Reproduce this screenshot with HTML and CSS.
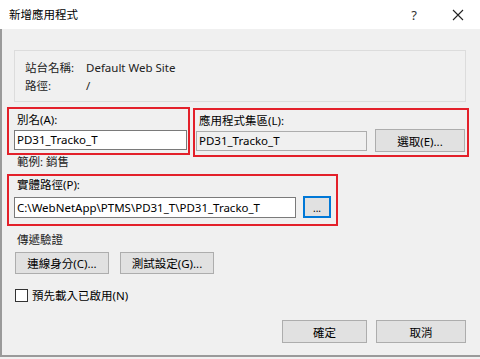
FILE: index.html
```html
<!DOCTYPE html>
<html lang="zh-Hant">
<head>
<meta charset="utf-8">
<title>新增應用程式</title>
<link rel="stylesheet" href="styles.css">
</head>
<body>
<div class="dialog">
  <div class="titlebar">
    <span class="title">新增應用程式</span>
    <span class="help">?</span>
    <svg class="close" width="12" height="12" viewBox="0 0 12 12"><path d="M1 1 L11 11 M11 1 L1 11" stroke="#222" stroke-width="1.1" fill="none"/></svg>
  </div>
  <div class="content">
    <div class="groupbox">
      <div class="info-row"><span class="info-label">站台名稱:</span><span>Default Web Site</span></div>
      <div class="info-row"><span class="info-label">路徑:</span><span>/</span></div>
    </div>
    <div class="row-top">
      <div class="anno box-alias">
        <div class="label">別名(A):</div>
        <div class="input">PD31_Tracko_T</div>
      </div>
      <div class="anno box-pool">
        <div class="label">應用程式集區(L):</div>
        <div class="pool-row">
          <div class="input readonly">PD31_Tracko_T</div>
          <div class="btn btn-select">選取(E)...</div>
        </div>
      </div>
    </div>
    <div class="example">範例: 銷售</div>
    <div class="anno box-path">
      <div class="label">實體路徑(P):</div>
      <div class="path-row">
        <div class="input path-input">C:\WebNetApp\PTMS\PD31_T\PD31_Tracko_T</div>
        <div class="btn btn-browse">...</div>
      </div>
    </div>
    <div class="section-label">傳遞驗證</div>
    <div class="auth-row">
      <div class="btn btn-auth">連線身分(C)...</div>
      <div class="btn btn-auth">測試設定(G)...</div>
    </div>
    <div class="check-row">
      <span class="checkbox"></span>
      <span class="check-label">預先載入已啟用(N)</span>
    </div>
    <div class="footer">
      <div class="btn btn-ok">確定</div>
      <div class="btn btn-cancel">取消</div>
    </div>
  </div>
</div>
</body>
</html>
```
FILE: styles.css
```css
html, body {
  margin: 0;
  padding: 0;
}
body {
  width: 480px;
  height: 359px;
  overflow: hidden;
  background: #f0f0f0;
  font-family: "Noto Sans", "Noto Sans CJK TC", sans-serif;
  font-size: 11.5px;
  color: #000;
}
.dialog {
  height: 357px;
  box-sizing: border-box;
  background: #f0f0f0;
  box-shadow: inset 2px -2px 0 0 #9a9a9a;
  position: relative;
}
.titlebar {
  height: 29px;
  background: #fff;
  display: flex;
  align-items: center;
  padding-left: 9px;
}
.title {
  flex: 1;
  line-height: 14px;
}
.help {
  font-size: 13px;
  color: #333;
  margin-right: 35px;
}
.close {
  margin-right: 16px;
}
.content {
  display: flex;
  flex-direction: column;
  align-items: flex-start;
}
.groupbox {
  margin: 21px 0 0 14px;
  width: 452px;
  height: 52px;
  box-sizing: border-box;
  border: 1px solid #dcdcdc;
  padding: 10px 0 0 10px;
}
.info-row {
  display: flex;
  line-height: 14px;
  height: 18px;
  color: #222;
}
.info-label {
  width: 61px;
}
.row-top {
  display: flex;
  align-items: flex-start;
  gap: 3px;
  margin: 5px 0 0 7px;
}
.anno {
  border: 2px solid #e3202a;
  box-sizing: border-box;
}
.label {
  line-height: 14px;
  height: 14px;
}
.input {
  box-sizing: border-box;
  height: 20px;
  background: #fff;
  border: 1px solid #7a7a7a;
  line-height: 18px;
  padding-left: 2px;
  white-space: nowrap;
  overflow: hidden;
}
.input.readonly {
  background: #f0f0f0;
  border-color: #adadad;
}
.btn {
  box-sizing: border-box;
  background: #e1e1e1;
  border: 1px solid #adadad;
  display: flex;
  align-items: center;
  justify-content: center;
  white-space: nowrap;
}
.box-alias {
  width: 183px;
  height: 48px;
  padding: 4px 0 0 5px;
}
.box-alias .label {
  padding-left: 3px;
}
.box-alias .input {
  margin-top: 3px;
  width: 173px;
}
.box-pool {
  width: 276px;
  height: 49px;
  margin-top: 1px;
  padding: 4px 0 0 1px;
}
.box-pool .label {
  padding-left: 3px;
}
.pool-row {
  display: flex;
  align-items: flex-start;
  margin-top: 1px;
}
.pool-row .input {
  margin-top: 2px;
  width: 171px;
}
.btn-select {
  margin-left: 8px;
  width: 90px;
  height: 23px;
}
.example {
  margin-left: 17px;
  line-height: 10px;
  height: 10px;
  color: #222;
}
.box-path {
  margin: 7px 0 0 7px;
  width: 331px;
  height: 52px;
  padding: 2px 0 0 5px;
}
.box-path .label {
  padding-left: 3px;
}
.path-row {
  display: flex;
  align-items: flex-start;
  margin-top: 4px;
}
.path-input {
  margin-top: 1px;
  width: 282px;
  height: 21px;
  line-height: 19px;
}
.btn-browse {
  margin-left: 7px;
  width: 28px;
  height: 22px;
  border: 2px solid #0078d7;
  font-size: 10px;
  line-height: 10px;
  padding-top: 2px;
}
.section-label {
  margin: 7px 0 0 17px;
  line-height: 14px;
  color: #222;
}
.auth-row {
  display: flex;
  gap: 11px;
  margin: 5px 0 0 15px;
}
.btn-auth {
  width: 94px;
  height: 22px;
}
.check-row {
  display: flex;
  align-items: center;
  margin: 15px 0 0 15px;
  height: 13px;
}
.checkbox {
  width: 13px;
  height: 13px;
  box-sizing: border-box;
  border: 1px solid #333;
  background: #fff;
}
.check-label {
  margin-left: 4px;
  line-height: 14px;
}
.footer {
  align-self: stretch;
  display: flex;
  justify-content: flex-end;
  gap: 9px;
  margin: 18px 14px 0 0;
}
.btn-ok {
  width: 85px;
  height: 23px;
}
.btn-cancel {
  width: 90px;
  height: 23px;
}
```
